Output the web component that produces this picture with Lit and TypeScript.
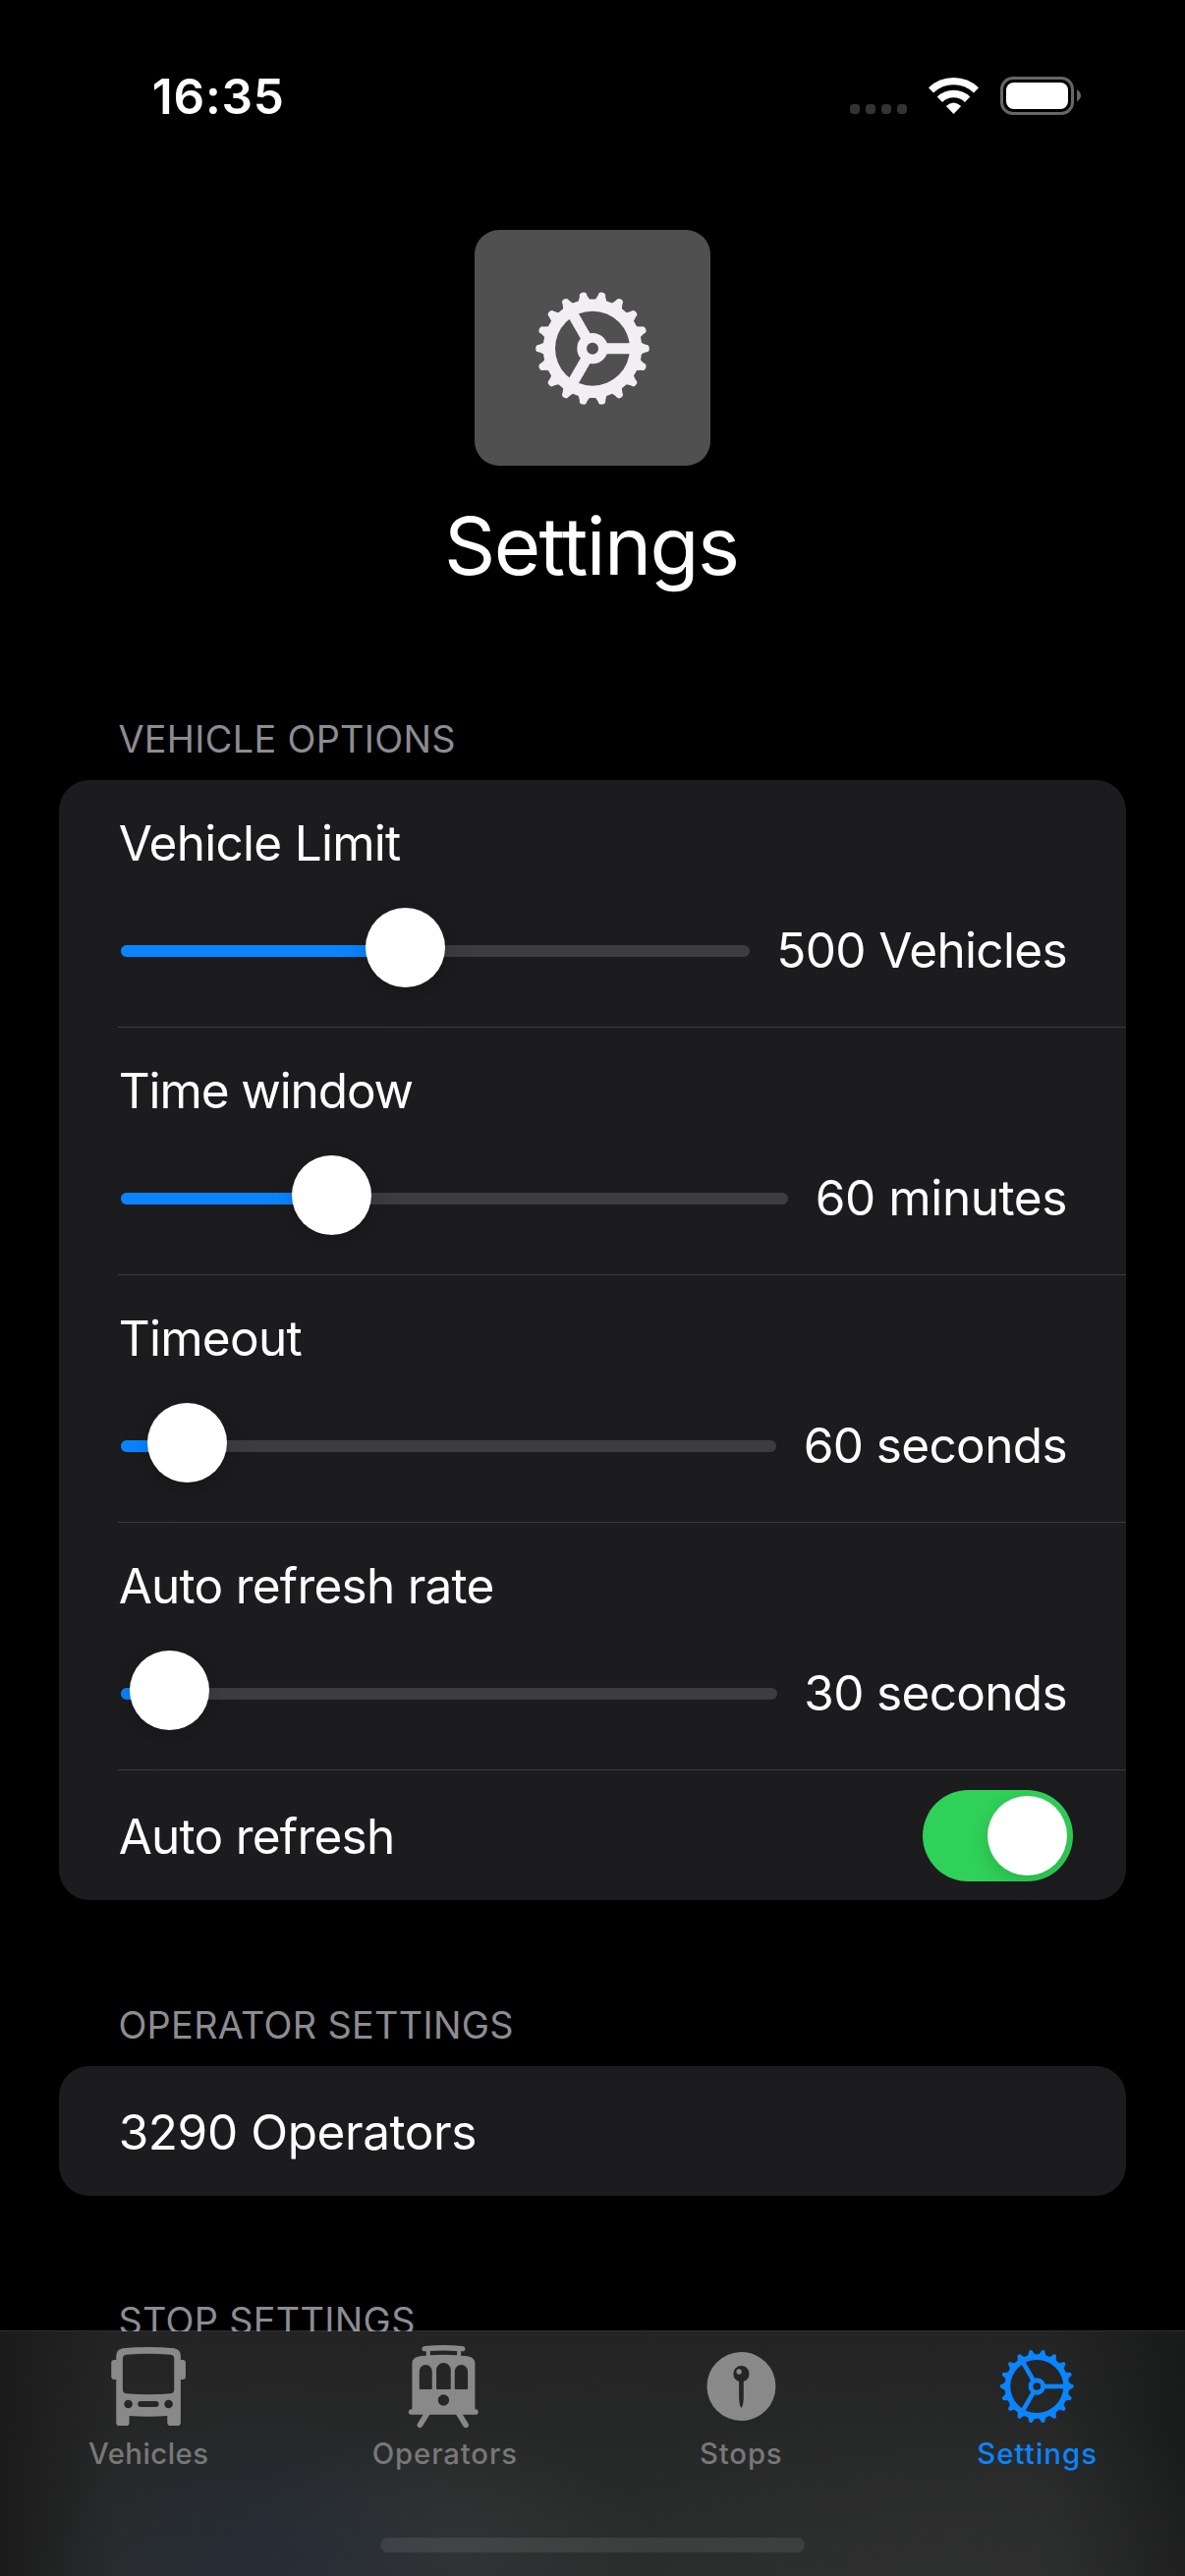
import { LitElement, html, svg, css } from "lit";
import { customElement, property } from "lit/decorators.js";

interface GearShape {
  outer: number;
  root: number;
  inner: number;
  hub: number;
  hole: number;
  spoke: number;
  tip: number;
  base: number;
}

const TEETH = 18;

/** Outline of the toothed rim, with rounded tooth tips. */
function rimPath(g: GearShape): string {
  const parts: string[] = [];
  const at = (along: number, across: number, a: number) =>
    `${(along * Math.cos(a) - across * Math.sin(a)).toFixed(2)} ${(along * Math.sin(a) + across * Math.cos(a)).toFixed(2)}`;
  for (let i = 0; i < TEETH; i++) {
    const a = (i * 2 * Math.PI) / TEETH;
    const shoulder = g.outer - g.tip;
    parts.push(`${i ? "L" : "M"}${at(g.root, -g.base, a)}`);
    parts.push(`L${at(shoulder, -g.tip, a)}`);
    parts.push(`A${g.tip} ${g.tip} 0 0 1 ${at(shoulder, g.tip, a)}`);
    parts.push(`L${at(g.root, g.base, a)}`);
  }
  const r = g.inner;
  return `${parts.join("")}ZM${r} 0A${r} ${r} 0 1 0 ${-r} 0A${r} ${r} 0 1 0 ${r} 0Z`;
}

function gear(g: GearShape) {
  const mid = (g.hub + g.hole) / 2;
  return svg`
    <path fill="currentColor" fill-rule="evenodd" d=${rimPath(g)}></path>
    <circle r=${mid} fill="none" stroke="currentColor" stroke-width=${g.hub - g.hole}></circle>
    ${[0, 120, 240].map(
      (deg) => svg`<path transform="rotate(${deg})" stroke="currentColor" stroke-width=${g.spoke}
        d="M${mid} 0H${(g.inner + g.root) / 2}"></path>`
    )}`;
}

const BOLD_GEAR: GearShape = { outer: 173.5, root: 150, inner: 114, hub: 47, hole: 18, spoke: 33, tip: 11.5, base: 17 };
const THIN_GEAR: GearShape = { outer: 112.5, root: 98, inner: 81, hub: 26, hole: 11.5, spoke: 14, tip: 6.5, base: 11 };

@customElement("status-bar")
export class StatusBar extends LitElement {
  static styles = css`
    :host {
      display: flex;
      justify-content: space-between;
      align-items: flex-start;
      height: 184px;
      padding: 50px 66px 0 154.7px;
    }
    .time {
      margin-top: 18px;
      font-size: 49.5px;
      line-height: 60px;
      font-weight: 600;
      letter-spacing: 0.8px;
    }
    svg {
      display: block;
    }
  `;
  render() {
    return html`
      <div class="time">16:35</div>
      <svg width="300" height="100" viewBox="0 0 900 300">
        ${[75, 123, 171, 219].map((x) => svg`<rect x=${x} y="168" width="30" height="30" rx="11" fill="#333"></rect>`)}
        <g fill="none" stroke="#fff">
          <path stroke-width="22" d="M322.5 125.6A100 100 0 0 1 460.5 125.6"></path>
          <path stroke-width="23" d="M349.1 153.5A61.5 61.5 0 0 1 433.9 153.5"></path>
        </g>
        <path fill="#fff" d="M391.5 198L368.5 174Q391.5 153 414.5 174Z"></path>
        <rect x="538.5" y="88.5" width="216" height="108" rx="34" fill="none" stroke="#666" stroke-width="9"></rect>
        <rect x="552" y="102" width="189" height="81" rx="23" fill="#fff"></rect>
        <path fill="#666" d="M768 124Q780 131 780 142T768 160Z"></path>
      </svg>
    `;
  }
}

@customElement("setting-slider")
export class SettingSlider extends LitElement {
  @property() label = "";
  @property() value = "";
  @property({ type: Number }) percent = 0;
  @property({ type: Number }) labelTracking = 0;
  @property({ type: Number }) valueTracking = 0;
  static styles = css`
    :host {
      display: flex;
      flex-direction: column;
      gap: 36px;
      box-sizing: border-box;
      height: 252px;
      margin-left: 60px;
      padding: 34px 60px 0 0;
      border-bottom: 1px solid #3a3a3c;
      font-size: 49.5px;
      line-height: 60px;
      white-space: nowrap;
    }
    .label {
      padding-left: 0.7px;
    }
    .control {
      display: flex;
      align-items: center;
      gap: 27.3px;
      height: 81px;
      padding-left: 3px;
    }
    .track {
      flex: 1;
      position: relative;
      height: 12px;
      margin-top: 7px;
      border-radius: 6px;
      background: #3d3c41;
    }
    .fill {
      height: 12px;
      border-radius: 6px;
      background: #0a84ff;
    }
    .thumb {
      position: absolute;
      top: -38px;
      width: 81px;
      height: 81px;
      margin-left: -40.5px;
      border-radius: 50%;
      background: #fff;
      box-shadow: 0 12px 36px rgba(0, 0, 0, 0.1), 0 2px 16px rgba(0, 0, 0, 0.1);
    }
    .value {
      margin-top: 5px;
    }
  `;
  render() {
    return html`
      <div class="label" style="letter-spacing:${this.labelTracking}px">${this.label}</div>
      <div class="control">
        <div class="track">
          <div class="fill" style="width:${this.percent}%"></div>
          <div class="thumb" style="left:${this.percent}%"></div>
        </div>
        <div class="value" style="letter-spacing:${this.valueTracking}px">${this.value}</div>
      </div>
    `;
  }
}

interface Tab {
  name: string;
  viewBox: string;
  tracking: number;
  active?: boolean;
  icon: unknown;
}

const TABS: Tab[] = [
  {
    name: "Vehicles",
    viewBox: "2.25 9 360 300",
    tracking: 0.46,
    icon: svg`<path fill="currentColor" fill-rule="evenodd" d="M84 96V84Q84 65 104 61Q182 53 261 61Q281 65 281 84V96H287Q296 96 296 105V147Q296 156 287 156H281V287Q281 297 271 297H251Q240 297 240 287V267Q182 271 124 267V287Q124 297 114 297H94Q84 297 84 287V156H78Q69 156 69 147V105Q69 96 78 96Z
      M104 92V187Q104 197 114 199Q182 205 251 199Q261 197 261 187V92Q261 82 251 80Q182 74 114 80Q104 82 104 92Z
      M121 218A13 13 0 1 0 121 244A13 13 0 1 0 121 218Z
      M244 218A13 13 0 1 0 244 244A13 13 0 1 0 244 218Z
      M159 222H205A9 9 0 0 1 205 240H159A9 9 0 0 1 159 222Z"></path>`,
  },
  {
    name: "Operators",
    viewBox: "-23.25 9 360 300",
    tracking: 0.89,
    icon: svg`
      <path fill="currentColor" fill-rule="evenodd" d="M98 54Q155 48 212 54Q221 55 221 63Q221 70 212 70H208V83Q236 84 243 90Q251 96 251 108V247H254Q261 248 261 255Q261 263 254 263H56Q48 263 48 255Q48 248 56 247H59V108Q59 96 67 90Q74 84 102 83V70H98Q89 70 89 63Q89 55 98 54Z
      M114 69V82Q155 79 196 82V69Q155 66 114 69Z
      M81 183V131A19.5 20 0 0 1 120 131V183Q120 186 117 186H84Q81 186 81 183Z
      M133 183V127A22 22 0 0 1 177 127V183Q177 186 174 186H136Q133 186 133 183Z
      M189 183V131A20 20 0 0 1 229 131V183Q229 186 226 186H192Q189 186 189 183Z
      M155 202A17 17 0 1 0 155 236A17 17 0 1 0 155 202Z"></path>
      <path stroke="currentColor" stroke-width="17" stroke-linecap="round" fill="none" d="M106 258L83 295M200 258L223 295"></path>`,
  },
  {
    name: "Stops",
    viewBox: "-181.35 -168 360 300",
    tracking: 0.87,
    icon: svg`<path fill="currentColor" fill-rule="evenodd" d="M0 -105A105 105 0 1 0 0 105A105 105 0 1 0 0 -105Z
      M-7 -15Q-24 -20 -24 -39A24 24 0 0 1 24 -39Q24 -20 7 -15V30Q7 58 0 66Q-7 58 -7 30Z"></path>
      <circle cx="-7" cy="-45" r="8" fill="currentColor"></circle>`,
  },
  {
    name: "Settings",
    viewBox: "-180.75 -168 360 300",
    tracking: 1.09,
    active: true,
    icon: gear(THIN_GEAR),
  },
];

@customElement("tab-bar")
export class TabBar extends LitElement {
  static styles = css`
    :host {
      display: flex;
      flex-direction: column;
      align-items: center;
      box-sizing: border-box;
      height: 250px;
      border-top: 1px solid rgba(255, 255, 255, 0.18);
      background: radial-gradient(ellipse 230px 180px at 270px 250px, rgba(36, 45, 58, 0.75), rgba(36, 45, 58, 0)),
        radial-gradient(ellipse 210px 130px at 450px 220px, rgba(56, 59, 60, 0.6), rgba(56, 59, 60, 0)),
        radial-gradient(ellipse 420px 180px at 960px 250px, rgba(50, 49, 49, 0.55), rgba(50, 49, 49, 0)),
        linear-gradient(90deg, #1a1b1a 0, rgba(26, 27, 26, 0) 120px, rgba(26, 26, 26, 0) 1070px, #191a1a 1206px),
        linear-gradient(#232423, #2a2c2c);
      background-clip: padding-box;
    }
    .tabs {
      display: flex;
      width: 100%;
    }
    .tab {
      flex: 1;
      display: flex;
      flex-direction: column;
      align-items: center;
      gap: 7px;
      color: #888988;
      font-size: 29.3px;
      line-height: 36px;
      font-weight: 500;
    }
    .name {
      padding-left: 1px;
      color: #777878;
    }
    .active,
    .active .name {
      color: #0a84ff;
    }
    svg {
      display: block;
    }
    .home {
      width: 432px;
      height: 15px;
      margin-top: 67px;
      border-radius: 8px;
      background: rgba(255, 255, 255, 0.085);
    }
  `;
  render() {
    return html`
      <div class="tabs">
        ${TABS.map(
          (t) => html`<div class="tab ${t.active ? "active" : ""}">
            <svg width="120" height="100" viewBox=${t.viewBox}>${t.icon}</svg>
            <div class="name" style="letter-spacing:${t.tracking}px">${t.name}</div>
          </div>`
        )}
      </div>
      <div class="home"></div>
    `;
  }
}

const SLIDERS = [
  { label: "Vehicle Limit", value: "500 Vehicles", percent: 45.25, lt: -0.73, vt: -0.65 },
  { label: "Time window", value: "60 minutes", percent: 31.5, lt: -1.1, vt: -0.42 },
  { label: "Timeout", value: "60 seconds", percent: 10.13, lt: -0.73, vt: -0.62 },
  { label: "Auto refresh rate", value: "30 seconds", percent: 7.4, lt: -0.75, vt: -0.66 },
];

@customElement("app-root")
export class AppRoot extends LitElement {
  static styles = css`
    :host {
      display: block;
      position: relative;
      height: 2622px;
      overflow: hidden;
      background: #000;
      color: #fff;
      font-family: Inter, "Liberation Sans", sans-serif;
      font-size: 49.5px;
      line-height: 60px;
      white-space: nowrap;
    }
    .hero {
      display: flex;
      flex-direction: column;
      align-items: center;
      gap: 33px;
      margin-bottom: 124px;
    }
    .badge {
      width: 240px;
      height: 240px;
      border-radius: 25px;
      background: #505050;
      color: #f2eef4;
    }
    .badge svg {
      display: block;
    }
    .title {
      padding-right: 2.6px;
      font-size: 81.5px;
      line-height: 98px;
      letter-spacing: -1.57px;
    }
    .section {
      margin-bottom: 104px;
      padding: 0 60px;
    }
    .heading {
      height: 65px;
      padding-left: 60.4px;
      color: #8d8c93;
      font-size: 37.8px;
      line-height: 46px;
      letter-spacing: 0.33px;
    }
    .card {
      border-radius: 31px;
      background: #1c1c1e;
    }
    .row {
      display: flex;
      align-items: center;
      justify-content: space-between;
      box-sizing: border-box;
      height: 132px;
      padding: 0 54px 0 60.7px;
    }
    .toggle {
      display: flex;
      justify-content: flex-end;
      box-sizing: border-box;
      width: 153px;
      height: 93px;
      padding: 6px;
      border-radius: 47px;
      background: #30d158;
    }
    .knob {
      width: 81px;
      height: 81px;
      border-radius: 50%;
      background: #fff;
      box-shadow: 0 6px 20px rgba(0, 0, 0, 0.15);
    }
    .auto {
      padding-top: 2px;
      letter-spacing: -0.75px;
    }
    .count {
      padding-top: 2px;
      letter-spacing: -0.42px;
    }
    tab-bar {
      position: absolute;
      left: 0;
      right: 0;
      bottom: 0;
    }
  `;
  render() {
    return html`
      <status-bar></status-bar>
      <div class="hero">
        <div class="badge">
          <svg width="240" height="240" viewBox="-360 -362 720 720">${gear(BOLD_GEAR)}</svg>
        </div>
        <div class="title">Settings</div>
      </div>
      <div class="section">
        <div class="heading">VEHICLE OPTIONS</div>
        <div class="card">
          ${SLIDERS.map(
            (s) => html`<setting-slider
              .label=${s.label}
              .value=${s.value}
              .percent=${s.percent}
              .labelTracking=${s.lt}
              .valueTracking=${s.vt}
            ></setting-slider>`
          )}
          <div class="row">
            <div class="auto">Auto refresh</div>
            <div class="toggle"><div class="knob"></div></div>
          </div>
        </div>
      </div>
      <div class="section">
        <div class="heading">OPERATOR SETTINGS</div>
        <div class="card">
          <div class="row"><div class="count">3290 Operators</div></div>
        </div>
      </div>
      <div class="section">
        <div class="heading">STOP SETTINGS</div>
      </div>
      <tab-bar></tab-bar>
    `;
  }
}
